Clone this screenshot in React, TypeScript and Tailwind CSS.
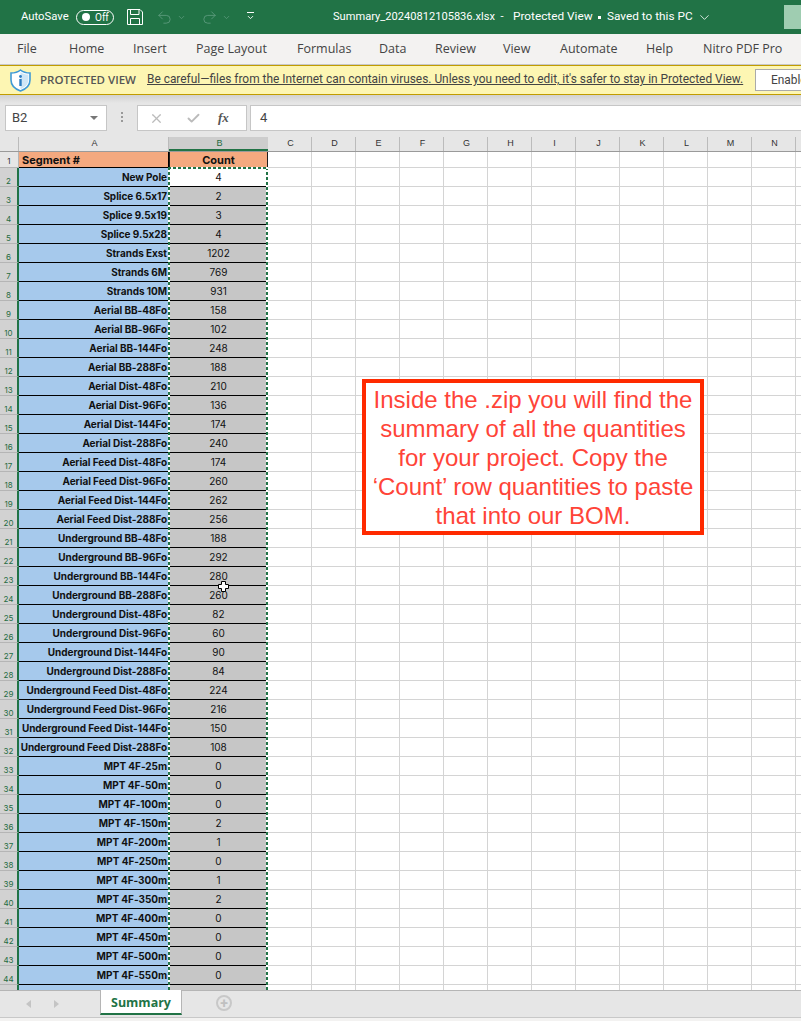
import { Undo2, Redo2, Check, X, ChevronDown } from "lucide-react";

const rows: [string, string][] = [
  ["New Pole", "4"], ["Splice 6.5x17", "2"], ["Splice 9.5x19", "3"], ["Splice 9.5x28", "4"],
  ["Strands Exst", "1202"], ["Strands 6M", "769"], ["Strands 10M", "931"],
  ["Aerial BB-48Fo", "158"], ["Aerial BB-96Fo", "102"], ["Aerial BB-144Fo", "248"], ["Aerial BB-288Fo", "188"],
  ["Aerial Dist-48Fo", "210"], ["Aerial Dist-96Fo", "136"], ["Aerial Dist-144Fo", "174"], ["Aerial Dist-288Fo", "240"],
  ["Aerial Feed Dist-48Fo", "174"], ["Aerial Feed Dist-96Fo", "260"], ["Aerial Feed Dist-144Fo", "262"], ["Aerial Feed Dist-288Fo", "256"],
  ["Underground BB-48Fo", "188"], ["Underground BB-96Fo", "292"], ["Underground BB-144Fo", "280"], ["Underground BB-288Fo", "260"],
  ["Underground Dist-48Fo", "82"], ["Underground Dist-96Fo", "60"], ["Underground Dist-144Fo", "90"], ["Underground Dist-288Fo", "84"],
  ["Underground Feed Dist-48Fo", "224"], ["Underground Feed Dist-96Fo", "216"], ["Underground Feed Dist-144Fo", "150"], ["Underground Feed Dist-288Fo", "108"],
  ["MPT 4F-25m", "0"], ["MPT 4F-50m", "0"], ["MPT 4F-100m", "0"], ["MPT 4F-150m", "2"], ["MPT 4F-200m", "1"], ["MPT 4F-250m", "0"],
  ["MPT 4F-300m", "1"], ["MPT 4F-350m", "2"], ["MPT 4F-400m", "0"], ["MPT 4F-450m", "0"], ["MPT 4F-500m", "0"], ["MPT 4F-550m", "0"],
  ["", ""],
];

const emptyCols = ["C", "D", "E", "F", "G", "H", "I", "J", "K", "L", "M", "N", ""];
const tabs = ["File", "Home", "Insert", "Page Layout", "Formulas", "Data", "Review", "View", "Automate", "Help", "Nitro PDF Pro"];
const tabGaps = ["w-[52px]", "w-[64px]", "w-[63px]", "w-[101px]", "w-[82px]", "w-[56px]", "w-[68px]", "w-[57px]", "w-[86px]", "w-[57px]", "w-[84px]"];

function EmptyCells() {
  return (
    <>
      {emptyCols.map((c) => (
        <div key={c} className="w-[44px] shrink-0 h-full border-r border-b border-[#d4d4d4]" />
      ))}
    </>
  );
}

function ShieldIcon() {
  return (
    <svg width="21" height="23" viewBox="0 0 21 23" className="shrink-0">
      <path d="M10.5 1 C8 3 5 4 1 4 V11 C1 16 5 20 10.5 22 C16 20 20 16 20 11 V4 C16 4 13 3 10.5 1Z" fill="#fff" stroke="#3f9ad6" strokeWidth="1.6" />
      <path d="M10.5 3 C12.8 4.8 15.5 5.6 18.4 5.6 V11 C18.4 15 15 18.4 10.5 20.2Z" fill="#cfe6f6" />
      <circle cx="10.5" cy="7.5" r="1.4" fill="#2b7cc0" />
      <rect x="9.3" y="10" width="2.4" height="7" fill="#2b7cc0" />
    </svg>
  );
}

function SaveIcon() {
  return (
    <svg width="16" height="16" viewBox="0 0 16 16" fill="none" stroke="#fff" strokeWidth="1" className="ml-[13px] shrink-0">
      <path d="M0.5 0.5 H13 L15.5 3 V15.5 H0.5Z" />
      <path d="M3.5 0.5 V5.5 H12 V0.5" />
      <path d="M3.5 15.5 V9.5 H12.5 V15.5" />
    </svg>
  );
}

function CellCursor() {
  return (
    <svg width="11" height="11" viewBox="0 0 11 11" className="absolute left-[218px] top-[429px]">
      <path d="M3.5 0.5 H7.5 V3.5 H10.5 V7.5 H7.5 V10.5 H3.5 V7.5 H0.5 V3.5 H3.5Z" fill="#fff" stroke="#000" />
    </svg>
  );
}

export default function App() {
  return (
    <div className="w-[801px] h-[1021px] overflow-hidden relative bg-white font-['Roboto',sans-serif] flex flex-col">
      {/* title bar */}
      <div className="h-[34px] shrink-0 bg-[#217346] text-white flex items-center text-[11.3px] pl-[21px] relative">
        <span className="w-[55px]">AutoSave</span>
        <div className="w-[38px] h-[15px] rounded-full border border-white flex items-center pl-[5px] gap-[5px] text-[10px]">
          <span className="w-[8px] h-[8px] rounded-full bg-white" />
          Off
        </div>
        <SaveIcon />
        <Undo2 size={17} strokeWidth={1.2} className="ml-[13px] text-[#5f9c7f]" />
        <ChevronDown size={9} className="ml-[4px] text-[#5f9c7f]" />
        <Redo2 size={17} strokeWidth={1.2} className="ml-[15px] text-[#5f9c7f]" />
        <ChevronDown size={9} className="ml-[4px] text-[#5f9c7f]" />
        <div className="ml-[15px] flex flex-col items-center gap-[2px]">
          <span className="w-[7px] h-px bg-white" />
          <ChevronDown size={9} strokeWidth={2.4} className="-mt-[2px]" />
        </div>
        <span className="ml-[78px] whitespace-nowrap text-[11.1px] w-[180px] shrink-0">Summary_20240812105836.xlsx&nbsp; -</span>
        <span className="whitespace-nowrap text-[11.8px] w-[94px] shrink-0">Protected View</span>
        <span className="whitespace-nowrap text-[11.8px]">Saved to this PC</span>
        <ChevronDown size={15} strokeWidth={1.3} className="ml-[4px]" />
        <div className="absolute right-0 top-[5px] w-[17px] h-[24px] bg-[#9fcdb1]" />
        <span className="absolute left-[598px] top-[16px] w-[3px] h-[3px] bg-white" />
      </div>

      {/* ribbon tabs */}
      <div className="h-[31px] shrink-0 bg-[#f3f2f1] flex items-center pl-[17px] text-[12.5px] font-['Open_Sans',sans-serif] text-[#444] border-b border-[#c8c8c8]">
        {tabs.map((t, i) => (
          <span key={t} className={`${tabGaps[i]} shrink-0 whitespace-nowrap`}>{t}</span>
        ))}
      </div>

      {/* protected view message */}
      <div className="h-[30px] shrink-0 bg-[#fdf6b3] border-y border-[#c19c00] flex items-center pl-[10px] text-[11.9px] text-[#444] whitespace-nowrap">
        <ShieldIcon />
        <span className="ml-[9px] font-semibold text-[11.5px] font-['Open_Sans',sans-serif] text-[#555] w-[107px] shrink-0">PROTECTED VIEW</span>
        <span className="underline w-[596px] shrink-0">Be careful—files from the Internet can contain viruses. Unless you need to edit, it's safer to stay in Protected View.</span>
        <div className="ml-[12px] h-[22px] w-[60px] shrink-0 bg-white border border-[#aaa] pl-[15px] leading-[20px] overflow-hidden">Enable</div>
      </div>

      {/* formula bar */}
      <div className="h-[42px] shrink-0 bg-[linear-gradient(#d2d2d2,#e6e6e6_8px)] flex items-start pt-[10px] text-[13px] text-[#444]">
        <div className="ml-[5px] w-[102px] h-[26px] bg-white border border-[#c6c6c6] flex items-center pl-[6px] relative">
          B2
          <span className="absolute right-[8px] top-[10px] w-0 h-0 border-x-[4px] border-x-transparent border-t-[4px] border-t-[#777]" />
        </div>
        <div className="ml-[14px] mt-[7px] flex flex-col gap-[2px]">
          <span className="w-[2px] h-[2px] bg-[#999]" />
          <span className="w-[2px] h-[2px] bg-[#999]" />
          <span className="w-[2px] h-[2px] bg-[#999]" />
        </div>
        <div className="ml-[14px] w-[110px] h-[26px] bg-white border border-[#c6c6c6] flex items-center pl-[11px] text-[#bbb]">
          <X size={15} strokeWidth={2} />
          <Check size={15} strokeWidth={3} className="ml-[22px]" />
          <span className="ml-[17px] text-[#555] italic font-['Liberation_Serif',serif] font-bold text-[13px]">fx</span>
        </div>
        <div className="ml-[3px] flex-1 h-[26px] bg-white border-y border-l border-[#c6c6c6] flex items-center pl-[9px]">4</div>
      </div>

      {/* column headers */}
      <div className="h-[15px] shrink-0 flex bg-[#e6e6e6] font-['Liberation_Sans',sans-serif] text-[9px] text-[#333] border-b border-[#9a9a9a] leading-[13px] pl-px">
        <div className="w-[18px] shrink-0 border-r border-[#bbb]" />
        <div className="w-[150px] shrink-0 text-center pl-[2px] border-r border-[#bbb]">A</div>
        <div className="w-[99px] shrink-0 text-center pl-[2px] bg-[#cdcdcd] text-[#1f6b41] border-b-2 border-[#217346]">B</div>
        {emptyCols.map((c) => (
          <div key={c} className="w-[44px] shrink-0 text-center pl-[2px] border-r border-[#bbb]">{c}</div>
        ))}
      </div>

      {/* sheet */}
      <div className="flex-1 min-h-0 overflow-hidden font-['Inter',sans-serif] [font-feature-settings:'calt'_0] text-[10px] text-[#111] relative">
        <div className="flex h-[16px]">
          <div className="w-[19px] shrink-0 bg-[#e6e6e6] border-r border-b border-[#b5b5b5] text-center text-[8px] leading-[18px] text-[#333]">1</div>
          <div className="w-[150px] shrink-0 bg-[#f4a97f] border-b border-r border-black font-bold text-[11px] leading-[17px] pl-[3px]">Segment #</div>
          <div className="w-[99px] shrink-0 bg-[#f4a97f] border-b border-black border-x border-x-[#1d1d1d] font-bold text-[11px] leading-[17px] text-center">Count</div>
          <EmptyCells />
        </div>
        {rows.map(([label, count], i) => (
          <div key={i} className="flex h-[19px]">
            <div className="w-[19px] shrink-0 bg-[#d2d2d2] border-r-2 border-r-[#217346] border-b border-b-[#b5b5b5] text-center text-[8px] pt-[7px] leading-[12px] text-[#1f6b41]">{label ? i + 2 : ""}</div>
            <div className="w-[150px] shrink-0 bg-[#a6c9ec] border-b border-black font-bold text-right pr-[2px] leading-[19px] whitespace-nowrap tracking-[-0.05px]">{label}</div>
            <div className={`w-[99px] shrink-0 border-b border-black text-center leading-[19px] ${i === 0 ? "bg-white" : "bg-[#c6c6c6]"}`}>{count}</div>
            <EmptyCells />
          </div>
        ))}

        {/* marching ants round the copied range */}
        <div className="absolute left-[168px] top-[15px] w-[2px] h-[900px] bg-[repeating-linear-gradient(#217346_0_3px,#fff_3px_5px)]" />
        <div className="absolute left-[266px] top-[15px] w-[2px] h-[900px] bg-[repeating-linear-gradient(#217346_0_3px,#fff_3px_5px)]" />
        <div className="absolute left-[168px] top-[15px] w-[100px] h-[2px] bg-[repeating-linear-gradient(90deg,#217346_0_3px,#fff_3px_5px)]" />

        {/* callout */}
        <div className="absolute left-[362px] top-[227px] w-[342px] h-[156px] bg-white border-[4px] border-[#ff2a00] flex items-center justify-center text-center font-['Liberation_Sans',sans-serif] text-[24px] leading-[29px] text-[#ff4438]">
          <p className="w-[330px]">Inside the .zip you will find the summary of all the quantities for your project. Copy the ‘Count’ row quantities to paste that into our BOM.</p>
        </div>

        <CellCursor />
      </div>

      {/* sheet tabs */}
      <div className="h-[31px] shrink-0 bg-[#e6e6e6] border-t border-[#b5b5b5] flex items-start relative">
        <span className="ml-[26px] mt-[9px] w-0 h-0 border-y-[4px] border-y-transparent border-r-[5px] border-r-[#c4c4c4]" />
        <span className="ml-[23px] mt-[9px] w-0 h-0 border-y-[4px] border-y-transparent border-l-[5px] border-l-[#c4c4c4]" />
        <div className="ml-[41px] -mt-px w-[82px] h-[25px] bg-white border-x border-b-2 border-x-[#b5b5b5] border-b-[#217346] text-center font-['Open_Sans',sans-serif] font-bold text-[12.5px] leading-[25px] text-[#217346]">Summary</div>
        <div className="ml-[34px] mt-[4px] w-[16px] h-[16px] rounded-full border-2 border-[#c8c8c8] flex items-center justify-center text-[#c0c0c0] text-[14px] leading-none font-bold">+</div>
        <div className="absolute left-0 right-0 bottom-0 h-[4px] bg-[#f3f2f1] border-t border-[#c8c8c8]" />
      </div>
    </div>
  );
}
